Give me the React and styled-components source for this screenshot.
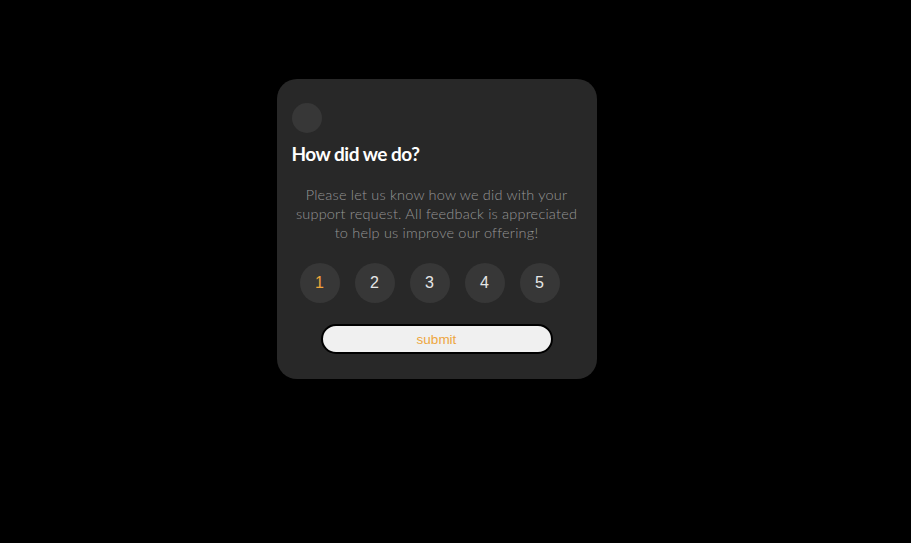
import React, { useState } from 'react';
import styled, { createGlobalStyle } from 'styled-components';

const GlobalStyle = createGlobalStyle`
    html, body {
        margin: 0;
        padding: 0;
        background: #000;
        height: 100%;
    }
    #root {
        min-height: 100vh;
    }
`;

const Page = styled.main`
    min-height: 100vh;
    display: flex;
    justify-content: center;
    align-items: flex-start;
    padding: 79px 38px 0 0;
    box-sizing: border-box;
`;

const Card = styled.section`
    width: 320px;
    height: 300px;
    box-sizing: border-box;
    background: #282828;
    border-radius: 20px;
    padding: 24px 15px 0;
    display: flex;
    flex-direction: column;
    font-family: 'Lato', 'Noto Sans', sans-serif;
`;

const Dot = styled.div`
    width: 30px;
    height: 30px;
    border-radius: 50%;
    background: #373737;
`;

const Title = styled.h1`
    margin: 9px 0 0;
    color: #fff;
    font-size: 19px;
    font-weight: 700;
    line-height: 24px;
    letter-spacing: -0.5px;
`;

const Text = styled.p`
    margin: 19px 0 0;
    color: #969696;
    font-size: 14.5px;
    font-weight: 300;
    line-height: 19px;
    letter-spacing: 0.2px;
    text-align: center;
`;

const Ratings = styled.div`
    display: flex;
    gap: 15px;
    margin-top: 21px;
    padding-left: 8px;
`;

const Rate = styled.button`
    width: 40px;
    height: 40px;
    border: none;
    border-radius: 50%;
    background: #373737;
    color: ${p => (p.$active ? '#f0a43a' : '#e6e6e6')};
    font-family: 'Liberation Sans', Arial, sans-serif;
    font-size: 16px;
    padding: 0;
    cursor: pointer;
`;

const Submit = styled.button`
    align-self: center;
    margin-top: 21px;
    width: 232px;
    height: 30px;
    box-sizing: border-box;
    border: 2px solid #000;
    border-radius: 15px;
    background: #f0f0f0;
    color: #eea63e;
    font-family: 'Liberation Sans', Arial, sans-serif;
    font-size: 13.5px;
    cursor: pointer;
`;

export default function App() {
    const [rating, setRating] = useState(1);

    return (
        <>
            <GlobalStyle />
            <Page>
                <Card>
                    <Dot />
                    <Title>How did we do?</Title>
                    <Text>
                        Please let us know how we did with your support request. All feedback is appreciated to help us improve our offering!
                    </Text>
                    <Ratings>
                        {[1, 2, 3, 4, 5].map(n => (
                            <Rate key={n} $active={rating === n} onClick={() => setRating(n)}>{n}</Rate>
                        ))}
                    </Ratings>
                    <Submit>submit</Submit>
                </Card>
            </Page>
        </>
    );
}
